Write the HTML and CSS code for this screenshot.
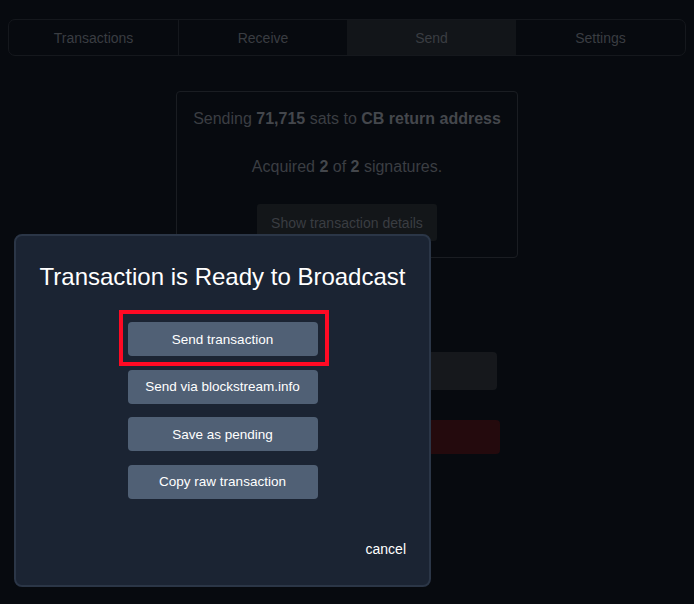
FILE: index.html
```html
<!DOCTYPE html>
<html lang="en">
<head>
<meta charset="utf-8">
<title>Send</title>
<link rel="stylesheet" href="styles.css">
</head>
<body>
<nav class="tabs">
  <div class="tab">Transactions</div>
  <div class="tab">Receive</div>
  <div class="tab active">Send</div>
  <div class="tab">Settings</div>
</nav>

<main class="send">
  <section class="summary">
    <p class="line">Sending <b>71,715</b> sats to <b>CB return address</b></p>
    <p class="line">Acquired <b>2</b> of <b>2</b> signatures.</p>
    <button class="ghost">Show transaction details</button>
  </section>
  <div class="spacer"></div>
  <button class="wide grey"></button>
  <button class="wide red"></button>
</main>

<div class="modal">
  <h2 class="modal-title">Transaction is Ready to Broadcast</h2>
  <div class="actions">
    <button class="action highlighted">Send transaction</button>
    <button class="action">Send via blockstream.info</button>
    <button class="action">Save as pending</button>
    <button class="action">Copy raw transaction</button>
  </div>
  <div class="footer"><span class="cancel">cancel</span></div>
</div>
</body>
</html>
```

FILE: styles.css
```css
html, body {
  background: #070a0f;
}
body {
  margin: 8px;
  font-family: "Liberation Sans", Arial, sans-serif;
  color: #3b3e43;
}
.tabs {
  box-sizing: border-box;
  margin-top: 11px;
  display: grid;
  grid-template-columns: repeat(4, 1fr);
  height: 37px;
  border: 1px solid #15181d;
  border-radius: 7px;
  overflow: hidden;
}
.tab {
  display: flex;
  align-items: center;
  justify-content: center;
  font-size: 14px;
  color: #3a3d42;
  border-left: 1px solid #15181d;
}
.tab:first-child { border-left: none; }
.tab.active { background: #121519; border-left: none; }
.tab.active + .tab { border-left: none; }

.send {
  display: flex;
  flex-direction: column;
  align-items: center;
}
.summary {
  margin-top: 35px;
  width: 340px;
  border: 1px solid #1a1d22;
  border-radius: 4px;
  padding: 15px 0 16px;
  text-align: center;
  display: flex;
  flex-direction: column;
  align-items: center;
}
.line {
  margin: 0;
  font-size: 16px;
  line-height: 24px;
  color: #3b3e43;
}
.line + .line { margin-top: 24px; }
.line b { color: #44474c; }
.ghost {
  margin-top: 25px;
  width: 180px;
  height: 37px;
  border: none;
  border-radius: 3px;
  background: #131619;
  color: #3a3d42;
  font-family: inherit;
  font-size: 14px;
}
.spacer { height: 94px; }
.wide {
  border: none;
  border-radius: 4px;
  font-family: inherit;
}
.wide.grey {
  width: 300px;
  height: 38px;
  background: #16181c;
}
.wide.red {
  margin-top: 30px;
  width: 306px;
  height: 34px;
  background: #240a0d;
}

.modal {
  position: absolute;
  left: 14px;
  top: 234px;
  width: 413px;
  height: 349px;
  background: #1b2433;
  border: 2px solid #2b3647;
  border-radius: 8px;
  display: flex;
  flex-direction: column;
  align-items: center;
}
.modal-title {
  margin: 27px 0 0;
  font-weight: normal;
  font-size: 24px;
  line-height: 28px;
  color: #ffffff;
}
.actions {
  margin-top: 31px;
  display: flex;
  flex-direction: column;
  gap: 13.5px;
}
.action {
  width: 190px;
  height: 34px;
  border: none;
  border-radius: 4px;
  background: #506075;
  color: #ffffff;
  font-family: inherit;
  font-size: 13.5px;
}
.highlighted { position: relative; }
.highlighted::after {
  content: "";
  position: absolute;
  top: -12px;
  left: -9px;
  right: -11px;
  bottom: -10px;
  border: 4px solid #ff0a24;
}
.footer {
  align-self: stretch;
  display: flex;
  justify-content: flex-end;
  padding: 42px 23px 0 0;
}
.cancel {
  font-size: 14px;
  color: #ffffff;
}
```
